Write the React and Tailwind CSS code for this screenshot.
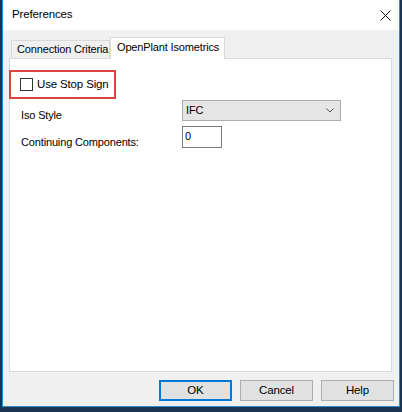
import React from "react";

export default function App() {
  return (
    <div className="w-[402px] h-[412px] bg-[#1b3550] pl-[2px] overflow-hidden text-[11px] tracking-[-0.15px] text-black font-['Liberation_Sans',Arial,sans-serif] whitespace-nowrap">
      <div className="w-[398px] h-[407px] flex flex-col border-l border-r border-b border-[#2b8bd3] bg-[#f0f0f0]">
        {/* Title bar */}
        <div className="h-[30px] bg-white flex items-center justify-between pl-[9px] pr-[8px]">
          <span className="text-[11.5px] leading-none">Preferences</span>
          <svg width="11" height="11" viewBox="0 0 11 11">
            <path d="M0.5 0.5 L10.5 10.5 M10.5 0.5 L0.5 10.5" stroke="#111" strokeWidth="1" fill="none" />
          </svg>
        </div>
        {/* Body */}
        <div className="flex-1 flex flex-col pl-[6px] pr-[5px] pt-[7px]">
          {/* Tabs */}
          <div className="flex items-end h-[21px] relative z-10">
            <div className="ml-[2px] w-[99px] h-[18px] border border-b-0 border-[#d9d9d9] bg-[#f0f0f0] flex items-center pl-[5px] leading-none">
              Connection Criteria
            </div>
            <div className="w-[115px] h-[22px] -mb-[1px] border border-b-0 border-[#d9d9d9] bg-white flex items-center pl-[6px] pb-[3px] leading-none">
              OpenPlant Isometrics
            </div>
          </div>
          {/* Panel */}
          <div className="w-[383px] h-[314px] bg-white border border-[#d9d9d9] flex flex-col">
            <div className="mt-[11px] -ml-[1px] w-[107px] h-[29px] border-2 border-[#d9453f] flex items-center pl-[9px]">
              <div className="w-[13px] h-[13px] border border-[#333] bg-white" />
              <span className="ml-[4px] leading-none text-[11.5px]">Use Stop Sign</span>
            </div>
            <div className="flex items-start mt-[1px] pl-[11px] h-[21px]">
              <span className="w-[161px] leading-none mt-[10px]">Iso Style</span>
              <div className="w-[159px] h-[21px] bg-[#e5e5e5] border border-[#acacac] flex items-center justify-between pl-[3px] pr-[6px]">
                <span className="leading-none">IFC</span>
                <svg width="8" height="5" viewBox="0 0 8 5">
                  <path d="M0.5 0.5 L4 4 L7.5 0.5" stroke="#555" strokeWidth="1" fill="none" />
                </svg>
              </div>
            </div>
            <div className="flex items-start mt-[5px] pl-[11px] h-[22px]">
              <span className="w-[161px] leading-none mt-[11px]">Continuing Components:</span>
              <div className="w-[40px] h-[22px] border border-[#7a7a7a] bg-white pl-[2px] pt-[4px] leading-none text-black">0</div>
            </div>
          </div>
          {/* Buttons */}
          <div className="flex justify-end gap-[8px] mt-[8px] text-[11.5px]">
            <button className="w-[73px] h-[21px] bg-[#e1e1e1] border-2 border-[#0078d7] leading-none text-black">OK</button>
            <button className="w-[73px] h-[21px] bg-[#e1e1e1] border border-[#adadad] leading-none text-black">Cancel</button>
            <button className="w-[73px] h-[21px] bg-[#e1e1e1] border border-[#adadad] leading-none text-black">Help</button>
          </div>
        </div>
      </div>
    </div>
  );
}
